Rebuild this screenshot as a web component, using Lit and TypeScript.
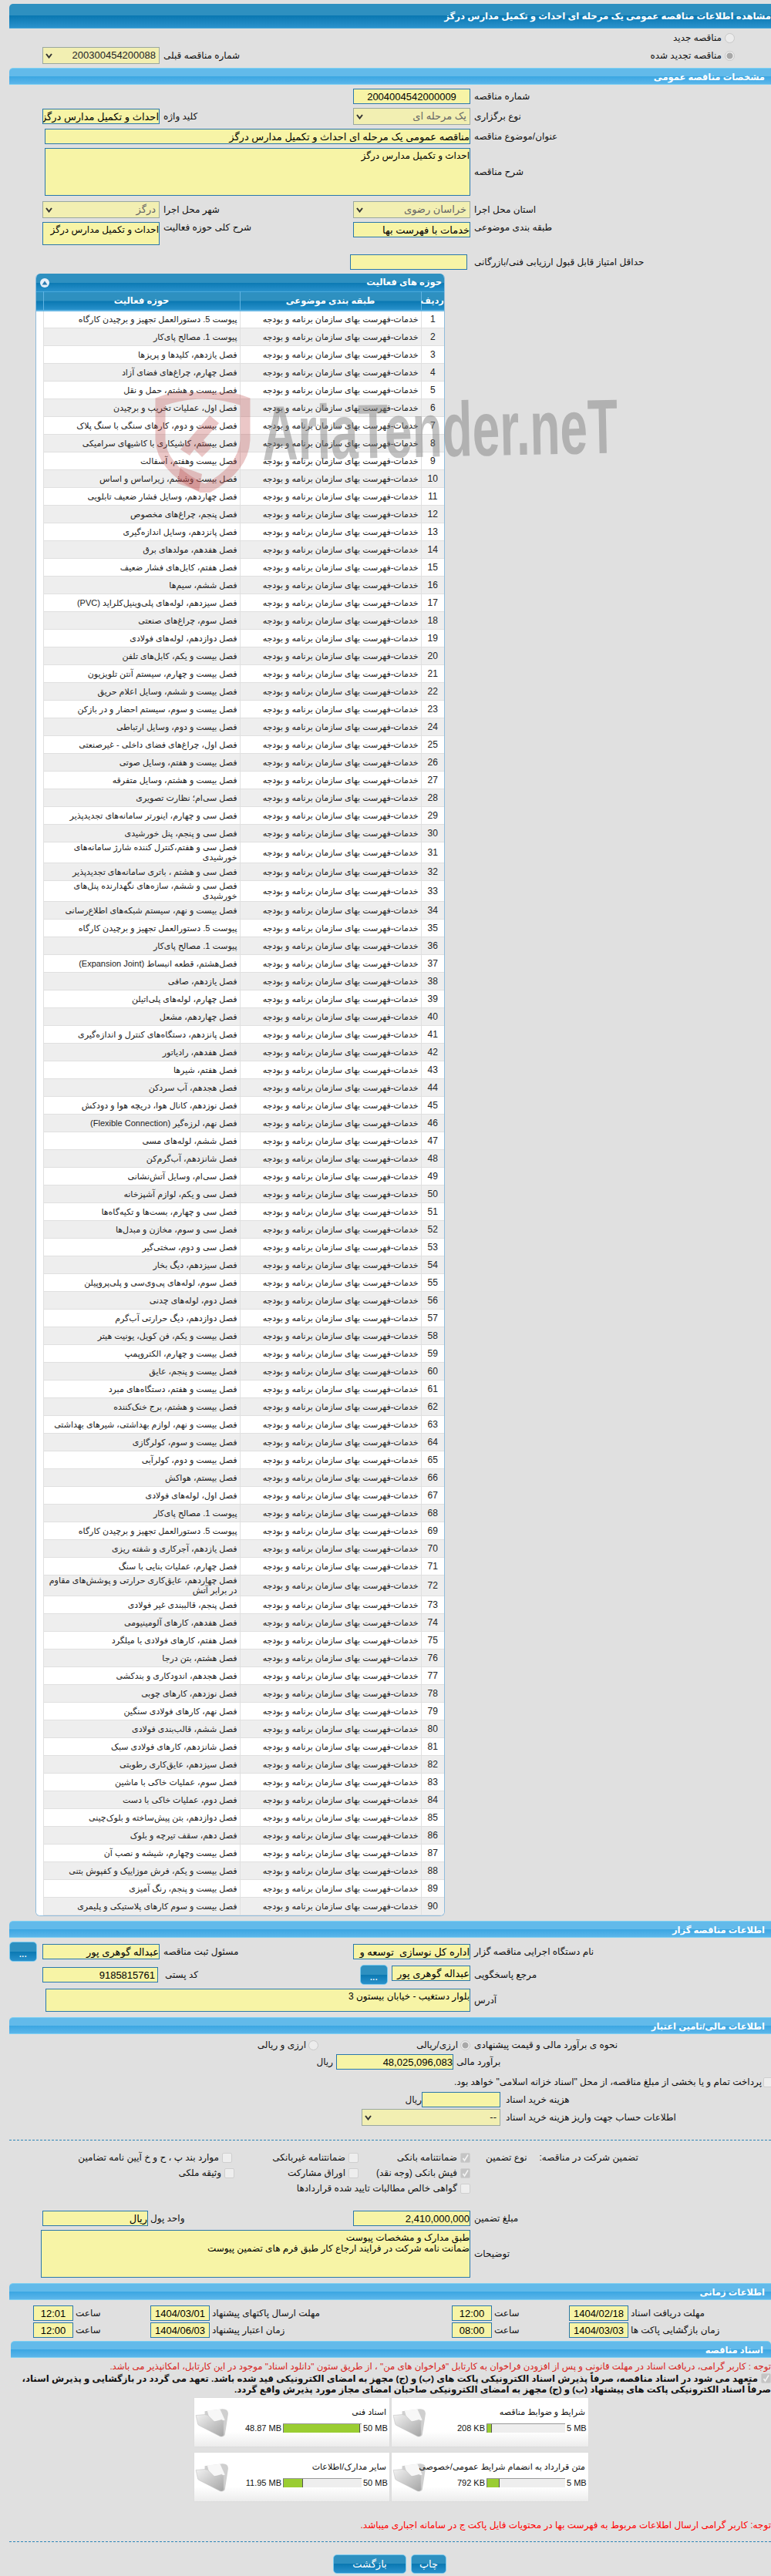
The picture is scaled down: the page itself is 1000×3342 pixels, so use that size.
import { LitElement, html, css, svg } from "lit";
import { customElement } from "lit/decorators.js";

const CAT = "خدمات-فهرست بهای سازمان برنامه و بودجه";
const ROWS = [
"پیوست 5. دستورالعمل تجهیز و برچیدن کارگاه","پیوست 1. مصالح پای‌کار","فصل یازدهم، کلیدها و پریزها","فصل چهارم، چراغ‌های فضای آزاد","فصل بیست و هشتم، حمل و نقل","فصل اول، عملیات تخریب و برچیدن","فصل بیست و دوم، کارهای سنگی با سنگ پلاک","فصل بیستم، کاشیکاری با کاشیهای سرامیکی","فصل بیست وهفتم، آسفالت","فصل بیست وششم، زیراساس و اساس",
"فصل چهاردهم، وسایل فشار ضعیف تابلویی","فصل پنجم، چراغ‌های مخصوص","فصل پانزدهم، وسایل اندازه‌گیری","فصل هفدهم، مولدهای برق","فصل هفتم، کابل‌های فشار ضعیف","فصل ششم، سیم‌ها","فصل سیزدهم، لوله‌های پلی‌وینیل‌کلراید (PVC)","فصل سوم، چراغ‌های صنعتی","فصل دوازدهم، لوله‌های فولادی","فصل بیست و یکم، کابل‌های تلفن",
"فصل بیست و چهارم، سیستم آنتن تلویزیون","فصل بیست و ششم، وسایل اعلام حریق","فصل بیست و سوم، سیستم احضار و در بازکن","فصل بیست و دوم، وسایل ارتباطی","فصل اول، چراغ‌های فضای داخلی - غیرصنعتی","فصل بیست و هفتم، وسایل صوتی","فصل بیست و هشتم، وسایل متفرقه","فصل سی‌ام؛ نظارت تصویری","فصل سی و چهارم، اینورتر سامانه‌های تجدیدپذیر","فصل سی و پنجم، پنل خورشیدی",
"فصل سی و هفتم،کنترل کننده شارژ سامانه‌های خورشیدی","فصل سی و هشتم ، باتری سامانه‌های تجدیدپذیر","فصل سی و ششم، سازه‌های نگهدارنده پنل‌های خورشیدی","فصل بیست و نهم، سیستم شبکه‌های اطلاع‌رسانی","پیوست 5. دستورالعمل تجهیز و برچیدن کارگاه","پیوست 1. مصالح پای‌کار","فصل‌هشتم، قطعه انبساط (Expansion Joint)","فصل یازدهم، صافی","فصل چهارم، لوله‌های پلی‌اتیلن","فصل چهاردهم، مشعل",
"فصل پانزدهم، دستگاه‌های کنترل و اندازه‌گیری","فصل هفدهم، رادیاتور","فصل هفتم، شیرها","فصل هجدهم، آب سردکن","فصل نوزدهم، کانال هوا، دریچه هوا و دودکش","فصل نهم، لرزه‌گیر (Flexible Connection)","فصل ششم، لوله‌های مسی","فصل شانزدهم، آب‌گرم‌کن","فصل سی‌ام، وسایل آتش‌نشانی","فصل سی و یکم، لوازم آشپزخانه",
"فصل سی و چهارم، بست‌ها و تکیه‌گاه‌ها","فصل سی و سوم، مخازن و مبدل‌ها","فصل سی و دوم، سختی‌گیر","فصل سیزدهم، دیگ بخار","فصل سوم، لوله‌های پی‌وی‌سی و پلی‌پروپیلن","فصل دوم، لوله‌های چدنی","فصل دوازدهم، دیگ حرارتی آب‌گرم","فصل بیست و یکم، فن کویل، یونیت هیتر","فصل بیست و چهارم، الکتروپمپ","فصل بیست و پنجم، عایق",
"فصل بیست و هفتم، دستگاه‌های مبرد","فصل بیست و هشتم، برج خنک‌کننده","فصل بیست و نهم، لوازم بهداشتی، شیرهای بهداشتی","فصل بیست و سوم، کولرگازی","فصل بیست و دوم، کولرآبی","فصل بیستم، هواکش","فصل اول، لوله‌های فولادی","پیوست 1. مصالح پای‌کار","پیوست 5. دستورالعمل تجهیز و برچیدن کارگاه","فصل یازدهم، آجرکاری و شفته ریزی",
"فصل چهارم، عملیات بنایی با سنگ","فصل چهاردهم، عایق‌کاری حرارتی و پوشش‌های مقاوم در برابر آتش","فصل پنجم، قالببندی غیر فولادی","فصل هفدهم، کارهای آلومینیومی","فصل هفتم، کارهای فولادی با میلگرد","فصل هشتم، بتن درجا","فصل هجدهم، اندودکاری و بندکشی","فصل نوزدهم، کارهای چوبی","فصل نهم، کارهای فولادی سنگین","فصل ششم، قالب‌بندی فولادی",
"فصل شانزدهم، کارهای فولادی سبک","فصل سیزدهم، عایق‌کاری رطوبتی","فصل سوم، عملیات خاکی با ماشین","فصل دوم، عملیات خاکی با دست","فصل دوازدهم، بتن پیش‌ساخته و بلوک‌چینی","فصل دهم، سقف تیرچه و بلوک","فصل بیست وچهارم، شیشه و نصب آن","فصل بیست و یکم، فرش موزاییک و کفپوش بتنی","فصل بیست و پنجم، رنگ آمیزی","فصل بیست و سوم کارهای پلاستیکی و پلیمری",
];

const CARDS = [
  { title: "اسناد فنی", used: "48.87 MB", max: "50 MB", pct: 98, big: true },
  { title: "شرایط و ضوابط مناقصه", used: "208 KB", max: "5 MB", pct: 7, big: false },
  { title: "سایر مدارک/اطلاعات", used: "11.95 MB", max: "50 MB", pct: 25, big: true },
  { title: "متن قرارداد به انضمام شرایط عمومی/خصوصی", used: "792 KB", max: "5 MB", pct: 17, big: false },
];

const chevron = html`<svg class="chev" width="9" height="7" viewBox="0 0 9 7"><path d="M1 1 L4.5 5.5 L8 1" fill="none" stroke="#333" stroke-width="2"/></svg>`;

const folder = html`<svg class="folder" width="44" height="38" viewBox="0 0 42 36">
  <defs><linearGradient id="fg" x1="0" y1="0" x2="1" y2="1"><stop offset="0" stop-color="#f2f2f2"/><stop offset="1" stop-color="#a4a4a4"/></linearGradient></defs>
  <path d="M12 4 L34 1 Q41 1 41 7 L37 33 Q36 36 33 34 L12 20Z" fill="#cfcfcf"/>
  <path d="M15 3 L31 1.5 L37 15 L19 17 Z" fill="#f7f7f7"/>
  <path d="M1 9 L12 8 Q16 8 18 11 L24 17 L33 14.5 L35 16 L35.5 33 Q35 36 31 35 L6 22 Q3 21 3 18 Z" fill="url(#fg)" stroke="#bdbdbd" stroke-width=".5"/>
</svg>`;

@customElement("app-root")
export class AppRoot extends LitElement {
  static styles = css`
    :host { display: block; width: 1000px; }
    * { box-sizing: border-box; }
    .page { position: relative; width: 1000px; height: 3342px; overflow: hidden; background: #e0e0e0; padding-top: 5px; font: 12px/14px "Liberation Sans", "DejaVu Sans", sans-serif; color: #111; }
    .head { margin-left: 12px; height: 32px; direction: rtl; color: #fff; font-weight: bold; font-size: 11.7px; line-height: 32px; white-space: nowrap; overflow: hidden; border-radius: 5px 0 0 0; background: linear-gradient(#2e90c0 0 50%, #0a78b2 50%, #2a92cc 100%); padding-right: 0; border-bottom: 1px solid #4aa8d8; }
    .sec { margin-left: 12px; height: 22px; direction: rtl; color: #fff; font-weight: bold; font-size: 11.5px; line-height: 22px; padding-right: 8px; border-radius: 5px 0 0 0; border-top: 1px solid #7ed0f2; border-bottom: 1px solid #7ed0f2; background: linear-gradient(#62baea 0 50%, #3aa6e2 50%, #5cb6ea 100%); }
    .sec.s6 { margin-left: 14px; padding-right: 10px; border-radius: 5px 5px 0 0; }
    .m4 { margin-top: 4px; } .m5 { margin-top: 5px; } .m6 { margin-top: 6px; } .m7 { margin-top: 7px; }
    .t { direction: rtl; text-align: left; white-space: nowrap; padding-left: 5px; font-size: 12px; }
    .tr { direction: rtl; text-align: right; white-space: nowrap; font-size: 12px; }
    .row { display: grid; align-items: center; }
    .start { align-self: start; }
    .in { display: block; width: 100%; height: 20px; border: 1px solid #2a78ac; background: #f7f4a6; color: #000; font: 13px "Liberation Sans", "DejaVu Sans", sans-serif; direction: rtl; text-align: right; padding: 0; outline: none; border-radius: 0; resize: none; line-height: 14px; overflow: hidden; }
    .in.c { text-align: center; }
    .in.p { padding-right: 3px; }
    textarea.in { padding-top: 2px; font-size: 12px; }
    .sel { height: 22px; border: 1px solid #9aa8a0; background: #f2efb2; color: #666; direction: rtl; display: flex; align-items: center; justify-content: space-between; padding: 0 4px 0 3px; font-size: 13px; white-space: nowrap; }
    .sel.dark { color: #222; }
    .sel .chev { flex: none; }
    .radio { display: block; width: 13px; height: 13px; border-radius: 50%; border: 1px solid #c8c8c8; background: #ececec; justify-self: center; }
    .radio.on { background: radial-gradient(circle, #a8a8a8 0 3.6px, #ececec 4.4px); }
    .cb { display: block; width: 13px; height: 13px; border-radius: 2px; border: 1px solid #cfcfcf; background: #eeeeee; }
    .cb.on { background: #c4c4c4; }
    .cb svg { display: block; }

    .r2 { padding-left: 55px; grid-template-columns: 152px 251px 152px 1fr; }
    .h20 { height: 20px; } .h22 { height: 22px; }
    .wide { padding-left: 58px; grid-template-columns: 552px 1fr; }
    .r7 { padding-left: 454px; grid-template-columns: 152px 1fr; margin-top: 12px; }
    .r7 .t { padding-left: 9px; }
    .ta1 { height: 62px; }
    .ta2 { height: 30px; }

    .top1 { height: 24px; grid-template-columns: 936px 13px 1fr; column-gap: 4px; }
    .top2 { height: 22px; padding-left: 55px; grid-template-columns: 152px 365px 364px 4px 13px 1fr; }

    .panel { margin: 5px 0 0 46px; width: 531px; background: #fff; border: 1px solid #8fbcdc; border-top: 0; border-radius: 6px; overflow: hidden; }
    .phead { height: 23px; direction: rtl; color: #fff; font-weight: bold; font-size: 11.5px; line-height: 23px; padding-right: 3px; display: flex; align-items: center; justify-content: space-between; background: linear-gradient(#2e90c0 0 50%, #0a78b2 50%, #2a92cc 100%); }
    .toggle { width: 12px; height: 12px; border-radius: 50%; background: #e6eff8; margin-left: 5px; display: flex; align-items: center; justify-content: center; }
    table { width: 100%; border-collapse: collapse; table-layout: fixed; direction: rtl; }
    .c1 { width: 30px; } .c2 { width: 235px; } .c3 { width: 255px; } .c4 { width: 9px; }
    th { height: 24px; padding: 0; color: #fff; font-weight: bold; font-size: 11.5px; text-align: center; border-left: 1px solid #62b4e2; border-top: 1px solid #4aa8d8; border-bottom: 2px solid #62b4e2; background: linear-gradient(#2e90c0 0 50%, #0a78b2 50%, #2a92cc 100%); }
    th:last-child { border-left: 0; }
    td { height: 23px; padding: 0 3px; font-size: 11px; line-height: 13px; border-bottom: 1px solid #e0e0e0; border-left: 1px solid #e0e0e0; text-align: right; color: #222; }
    td.n { text-align: center; font-size: 12px; padding: 0; }
    td.b { background: #fff !important; border: 0; padding: 0; }
    tr.alt td { background: #eee; }

    .a1 { height: 26px; grid-template-columns: 36px 7px 152px 251px 152px 1fr; padding-left: 12px; margin-top: 5px; }
    .a2 { height: 26px; grid-template-columns: 150px 262px 36px 5px 102px 1fr; padding-left: 55px; margin-top: 4px; }
    .a2 .pc { padding-left: 9px; }
    .a2 .start { margin-top: 1px; }
    .addr { padding-left: 59px; grid-template-columns: 551px 1fr; margin-top: 5px; }
    .dots { height: 26px; border: 1px solid #7ccaee; border-radius: 5px; background: linear-gradient(#2e90c0 0 50%, #0a78b2 50%, #2a92cc 100%); color: #fff; display: flex; align-items: center; justify-content: center; font-weight: bold; font-size: 10px; padding-top: 7px; letter-spacing: .5px; }

    .f1 { height: 20px; grid-template-columns: 397px 13px 178px 13px 1fr; column-gap: 3px; margin-top: 4px; }
    .f1 .t { padding-left: 2px; }
    .f2 { height: 20px; grid-template-columns: 432px 152px 1fr; column-gap: 4px; margin-top: 2px; }
    .f2 .t { padding-left: 0; }
    .f3 { height: 20px; display: flex; justify-content: flex-end; align-items: center; gap: 2px; margin: 6px -3px 0 0; }
    .f4 { height: 20px; grid-template-columns: 547px 102px 1fr; margin-top: 3px; }
    .f4 .t { padding-left: 7px; }
    .f5 { height: 22px; grid-template-columns: 469px 180px 1fr; margin-top: 2px; }
    .f5 .t { padding-left: 7px; }
    .dash { margin: 18px 0 0 12px; border-top: 1px dashed #2e86b8; height: 0; }

    .g { height: 20px; column-gap: 4px; }
    .g1 { grid-template-columns: 284px 13px 143px 13px 124px 13px 1fr; margin-top: 12px; }
    .g2 { grid-template-columns: 287px 13px 140px 13px 124px 13px 1fr; }
    .g3 { grid-template-columns: 593px 13px 1fr; }
    .gl { display: flex; gap: 16px; padding-left: 16px; }
    .gl .t { padding: 0; }
    .amt { padding-left: 55px; grid-template-columns: 137px 266px 152px 1fr; margin-top: 19px; }
    .amt .t { padding-left: 3px; }
    .amt .t.x { padding-left: 5px; }
    .desc { padding-left: 53px; grid-template-columns: 557px 1fr; margin-top: 5px; }

    .dt { height: 20px; padding-left: 43px; grid-template-columns: 52px 100px 77px 314px 52px 100px 77px 1fr; }
    .dt .t { padding-left: 3px; }
    .dt2 { margin-top: 2px; }

    .note { height: 16px; line-height: 16px; direction: rtl; white-space: nowrap; color: #d8201a; font-size: 11.7px; margin-top: 3px; }
    .pledge { margin-top: 1px; height: 28px; direction: rtl; white-space: nowrap; font-weight: bold; font-size: 11.7px; line-height: 14px; color: #111; }
    .pledge .cb { display: inline-block; vertical-align: -2px; margin-left: 4px; }
    .cards { margin-top: 4px; padding-left: 252px; display: grid; grid-template-columns: 253px 255px; column-gap: 3px; row-gap: 8px; }
    .card { height: 63px; display: flex; background: linear-gradient(#fff 0 70%, #ececec 100%); box-shadow: 0 0 1px #ccc; }
    .folder { flex: none; margin: 13px 0 0 1px; }
    .cbody { flex: 1; padding: 11px 4px 0 0; min-width: 0; }
    .ctitle { direction: rtl; font-size: 11px; line-height: 14px; white-space: nowrap; height: 17px; }
    .prog { display: flex; align-items: center; justify-content: flex-end; gap: 2px; margin-top: 5px; font-size: 11px; height: 12px; padding-right: 2px; white-space: nowrap; }
    .bar { width: 102px; height: 12px; background: #eee; border-top: 1px solid #999; display: flex; }
    .fill { height: 11px; background: #9acd32; border-right: 1px solid #555; border-left: 1px solid #777; }
    .maxl { width: 22px; text-align: left; }
    .maxl.big { width: 28px; }
    .note2 { margin-top: 23px; height: 16px; line-height: 16px; direction: rtl; white-space: nowrap; color: #f00; font-size: 12px; }
    .dash2 { margin: 13px 0 0 12px; border-top: 1px dashed #2e86b8; height: 0; }
    .btns { margin-top: 16px; padding-left: 432px; display: flex; gap: 6px; }
    .btn { height: 25px; border: 1px solid #7ccaee; border-radius: 5px; color: #fff; font-size: 13px; display: flex; align-items: center; justify-content: center; background: linear-gradient(#2e90c0 0 50%, #0a78b2 50%, #2a92cc 100%); direction: rtl; }
    .btn.back { width: 95px; } .btn.print { width: 46px; }

    .mark { position: absolute; left: 200px; top: 505px; width: 610px; height: 140px; pointer-events: none; }
    .mark svg { position: absolute; left: 0; top: 4px; }
    .word { position: absolute; left: 140px; top: 2px; font: bold 100px/110px "Liberation Sans", sans-serif; color: rgba(120,120,120,.45); white-space: nowrap; transform-origin: 0 50%; transform: rotate(-1.2deg) scaleX(.64); }
  `;

  private cb(on = false) {
    return html`<span class="cb ${on ? "on" : ""}">${on ? html`<svg width="11" height="11" viewBox="0 0 11 11"><path d="M2.5 6 L4.5 9 L9 1.5" fill="none" stroke="#f4f4f4" stroke-width="1.6"/></svg>` : ""}</span>`;
  }
  private input(v: string, cls = "") {
    return html`<input class="in ${cls}" readonly .value=${v} />`;
  }
  private sel(v: string, cls = "") {
    return html`<div class="sel ${cls}"><span>${v}</span>${chevron}</div>`;
  }

  private card(c: (typeof CARDS)[number]) {
    return html`<div class="card">
      ${folder}
      <div class="cbody">
        <div class="ctitle">${c.title}</div>
        <div class="prog"><span>${c.used}</span>
          <div class="bar"><div class="fill" style="width:${c.pct}%"></div></div>
          <span class="maxl ${c.big ? "big" : ""}">${c.max}</span></div>
      </div>
    </div>`;
  }

  render() {
    return html`<div class="page">
      <div class="head">مشاهده اطلاعات مناقصه عمومی یک مرحله ای احداث و تکمیل مدارس درگز</div>

      <div class="row top1"><span class="tr">مناقصه جدید</span><span class="radio"></span><span></span></div>
      <div class="row top2">
        ${this.sel("200300454200088", "dark")}
        <span class="t">شماره مناقصه قبلی</span>
        <span class="tr">مناقصه تجدید شده</span><span></span><span class="radio on"></span><span></span>
      </div>

      <div class="sec m5">مشخصات مناقصه عمومی</div>

      <div class="row r2 h20 m5"><span></span><span></span>${this.input("2004004542000009", "c")}<span class="t">شماره مناقصه</span></div>
      <div class="row r2 h22 m5">${this.input("احداث و تکمیل مدارس درگز")}<span class="t">کلید واژه</span>${this.sel("یک مرحله ای")}<span class="t">نوع برگزاری</span></div>
      <div class="row wide h20 m5">${this.input("مناقصه عمومی یک مرحله ای احداث و تکمیل مدارس درگز")}<span class="t">عنوان/موضوع مناقصه</span></div>
      <div class="row wide ta1 m5"><textarea class="in ta1" readonly .value=${"احداث و تکمیل مدارس درگز"}></textarea><span class="t">شرح مناقصه</span></div>
      <div class="row r2 h22 m7">${this.sel("درگز")}<span class="t">شهر محل اجرا</span>${this.sel("خراسان رضوی")}<span class="t">استان محل اجرا</span></div>
      <div class="row r2 ta2 m5">
        <textarea class="in ta2" readonly .value=${"احداث و تکمیل مدارس درگز"}></textarea>
        <span class="t start">شرح کلی حوزه فعالیت</span>
        <div class="start">${this.input("خدمات با فهرست بها")}</div>
        <span class="t start">طبقه بندی موضوعی</span>
      </div>
      <div class="row r7 h20">${this.input("")}<span class="t">حداقل امتیاز قابل قبول ارزیابی فنی/بازرگانی</span></div>

      <div class="panel">
        <div class="phead"><span>حوزه های فعالیت</span>
          <span class="toggle"><svg width="8" height="6" viewBox="0 0 8 6"><path d="M4 .5 L7.5 5.5 H.5Z" fill="#2a7ab0"/></svg></span></div>
        <table>
          <colgroup><col class="c1"/><col class="c2"/><col class="c3"/><col class="c4"/></colgroup>
          <thead><tr><th>ردیف</th><th>طبقه بندی موضوعی</th><th>حوزه فعالیت</th><th></th></tr></thead>
          <tbody>
            ${ROWS.map((r, i) => html`<tr class=${i % 2 ? "alt" : ""}><td class="n">${i + 1}</td><td>${CAT}</td><td>${r}</td><td class="b"></td></tr>`)}
          </tbody>
        </table>
      </div>

      <div class="sec m6">اطلاعات مناقصه گزار</div>
      <div class="row a1">
        <div class="dots">...</div><span></span>
        ${this.input("عبداله گوهری پور")}<span class="t">مسئول ثبت مناقصه</span>
        ${this.input("اداره کل نوسازی  توسعه و")}<span class="t">نام دستگاه اجرایی مناقصه گزار</span>
      </div>
      <div class="row a2">
        ${this.input("9185815761", "p")}<span class="t pc">کد پستی</span>
        <div class="dots">...</div><span></span>
        <div class="start">${this.input("عبداله گوهری پور")}</div><span class="t">مرجع پاسخگویی</span>
      </div>
      <div class="row addr ta2"><textarea class="in ta2" readonly .value=${"بلوار دستغیب - خیابان بیستون 3"}></textarea><span class="t">آدرس</span></div>

      <div class="sec m7">اطلاعات مالی/تامین اعتبار</div>
      <div class="row f1"><span class="tr">ارزی و ریالی</span><span class="radio"></span><span class="tr">ارزی/ریالی</span><span class="radio on"></span><span class="t">نحوه ی برآورد مالی و قیمت پیشنهادی</span></div>
      <div class="row f2"><span class="tr">ریال</span>${this.input("48,025,096,083")}<span class="t">برآورد مالی</span></div>
      <div class="f3"><span class="tr">پرداخت تمام و یا بخشی از مبلغ مناقصه، از محل "اسناد خزانه اسلامی" خواهد بود.</span>${this.cb()}</div>
      <div class="row f4"><span class="tr">ریال</span>${this.input("")}<span class="t">هزینه خرید اسناد</span></div>
      <div class="row f5"><span></span>${this.sel("--", "dark")}<span class="t">اطلاعات حساب جهت واریز هزینه خرید اسناد</span></div>
      <div class="dash"></div>

      <div class="row g g1"><span class="tr">موارد بند پ ، ح و خ آیین نامه تضامین</span>${this.cb()}<span class="tr">ضمانتنامه غیربانکی</span>${this.cb()}<span class="tr">ضمانتنامه بانکی</span>${this.cb(true)}
        <div class="gl"><span class="t">نوع تضمین</span><span class="t">تضمین شرکت در مناقصه:</span></div></div>
      <div class="row g g2"><span class="tr">وثیقه ملکی</span>${this.cb()}<span class="tr">اوراق مشارکت</span>${this.cb()}<span class="tr">فیش بانکی (وجه نقد)</span>${this.cb(true)}<span></span></div>
      <div class="row g g3"><span class="tr">گواهی خالص مطالبات تایید شده قراردادها</span>${this.cb()}<span></span></div>

      <div class="row amt h20">${this.input("ریال")}<span class="t">واحد پول</span>${this.input("2,410,000,000")}<span class="t x">مبلغ تضمین</span></div>
      <div class="row desc ta1"><textarea class="in ta1" readonly .value=${"طبق مدارک و مشخصات پیوست\nضمانت نامه شرکت در فرایند ارجاع کار طبق فرم های تضمین پیوست"}></textarea><span class="t">توضیحات</span></div>

      <div class="sec m7">اطلاعات زمانی</div>
      <div class="row dt m7">${this.input("12:01", "c")}<span class="t">ساعت</span>${this.input("1404/03/01", "c")}<span class="t">مهلت ارسال پاکتهای پیشنهاد</span>${this.input("12:00", "c")}<span class="t">ساعت</span>${this.input("1404/02/18", "c")}<span class="t">مهلت دریافت اسناد</span></div>
      <div class="row dt dt2">${this.input("12:00", "c")}<span class="t">ساعت</span>${this.input("1404/06/03", "c")}<span class="t">زمان اعتبار پیشنهاد</span>${this.input("08:00", "c")}<span class="t">ساعت</span>${this.input("1404/03/03", "c")}<span class="t">زمان بازگشایی پاکت ها</span></div>

      <div class="sec s6 m4">اسناد مناقصه</div>
      <div class="note">توجه : کاربر گرامی، دریافت اسناد در مهلت قانونی و پس از افزودن فراخوان به کارتابل "فراخوان های من" ، از طریق ستون "دانلود اسناد" موجود در این کارتابل، امکانپذیر می باشد.</div>
      <div class="pledge">${this.cb(true)}متعهد می شود در اسناد مناقصه، صرفاً پذیرش اسناد الکترونیکی پاکت های (ب) و (ج) مجهز به امضای الکترونیکی قید شده باشد. تعهد می گردد در بازگشایی و پذیرش اسناد،<br />صرفاً اسناد الکترونیکی پاکت های پیشنهاد (ب) و (ج) مجهز به امضای الکترونیکی صاحبان امضای مجاز مورد پذیرش واقع گردد.</div>
      <div class="cards">${CARDS.map((c) => this.card(c))}</div>
      <div class="note2">توجه: کاربر گرامی ارسال اطلاعات مربوط به فهرست بها در محتویات فایل پاکت ج در سامانه اجباری میباشد.</div>
      <div class="dash2"></div>
      <div class="btns"><div class="btn back">بازگشت</div><div class="btn print">چاپ</div></div>

      <div class="mark">
        <svg width="126" height="130" viewBox="0 0 126 130">
          ${svg`<path d="M8 12 Q62 -8 118 12 L118 62 Q116 100 66 126 Q10 100 8 62 Z" fill="none" stroke="rgba(190,70,70,.3)" stroke-width="13"/>
          <path d="M34 74 L72 30 L84 40 L64 62 L74 72 L62 84 L52 74 L46 82 Z" fill="rgba(190,70,70,.3)"/>
          <path d="M34 96 L62 106 L58 128 L30 118 Z" fill="rgba(190,70,70,.3)"/>`}
        </svg>
        <div class="word">AriaTender.neT</div>
      </div>
    </div>`;
  }
}
